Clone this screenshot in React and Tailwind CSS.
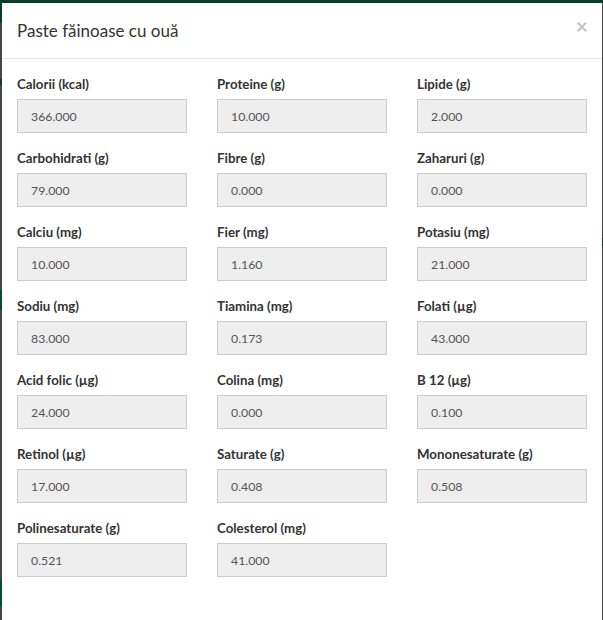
const FIELDS = [
  ['Calorii (kcal)', '366.000'],
  ['Proteine (g)', '10.000'],
  ['Lipide (g)', '2.000'],
  ['Carbohidrati (g)', '79.000'],
  ['Fibre (g)', '0.000'],
  ['Zaharuri (g)', '0.000'],
  ['Calciu (mg)', '10.000'],
  ['Fier (mg)', '1.160'],
  ['Potasiu (mg)', '21.000'],
  ['Sodiu (mg)', '83.000'],
  ['Tiamina (mg)', '0.173'],
  ['Folati (µg)', '43.000'],
  ['Acid folic (µg)', '24.000'],
  ['Colina (mg)', '0.000'],
  ['B 12 (µg)', '0.100'],
  ['Retinol (µg)', '17.000'],
  ['Saturate (g)', '0.408'],
  ['Mononesaturate (g)', '0.508'],
  ['Polinesaturate (g)', '0.521'],
  ['Colesterol (mg)', '41.000'],
];

function Field({ label, value }) {
  return (
    <div className="mb-[15px]">
      <label className="block text-[13.3px] leading-[20px] font-bold text-[#333] mb-[5px]">{label}</label>
      <input
        readOnly
        value={value}
        className="block w-full h-[34px] px-[13px] py-[6px] text-[12.3px] text-[#555] bg-[#eee] border border-[#ccc] outline-none"
      />
    </div>
  );
}

export default function App() {
  return (
    <div className="w-[603px] h-[620px] overflow-hidden bg-[#464646] flex flex-col font-['Lato','Noto_Sans',sans-serif]">
      <div className="h-[3px] bg-[#0b3d26] shrink-0" />
      <div className="flex flex-1 min-h-0">
        <div className="w-[2px] shrink-0 flex flex-col">
          <div className="h-[20px] bg-[#0b3d26]" />
          <div className="h-[56px]" />
          <div className="h-[6px] bg-[#0b3d26]" />
          <div className="h-[205px]" />
          <div className="h-[20px] bg-[#0b4a2c]" />
          <div className="h-[270px]" />
          <div className="h-[26px] bg-[#0b4a2c]" />
        </div>
        <div className="w-[600px] bg-white shrink-0 flex flex-col">
          <div className="relative px-[15px] py-[15px] border-b border-[#e5e5e5]">
            <h4 className="text-[17px] leading-[25px] text-[#333]">Paste făinoase cu ouă</h4>
            <button className="absolute right-[14px] top-[12px] text-[21px] leading-[21px] font-bold text-[#c4c4c4]">×</button>
          </div>
          <div className="px-[15px] pt-[15px] grid grid-cols-3 gap-x-[30px]">
            {FIELDS.map(([l, v]) => (
              <Field key={l} label={l} value={v} />
            ))}
          </div>
        </div>
        <div className="w-[1px] shrink-0 flex flex-col">
          <div className="h-[235px]" />
          <div className="h-[8px] bg-[#0b3d26]" />
        </div>
      </div>
    </div>
  );
}
